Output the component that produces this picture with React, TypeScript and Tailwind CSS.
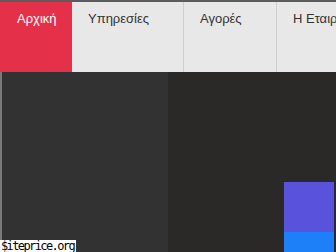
export default function App() {
  const tabs = [
    { label: 'Αρχική', w: 'w-[72px]', active: true },
    { label: 'Υπηρεσίες', w: 'w-[112px]', active: false },
    { label: 'Αγορές', w: 'w-[93px]', active: false },
    { label: 'Η Εταιρεία', w: 'w-[90px]', active: false },
  ];

  return (
    <div className="relative w-[336px] h-[252px] overflow-hidden bg-[#2a2928] flex flex-col font-['Liberation_Sans',Arial,sans-serif]">
      {/* top navigation */}
      <nav className="h-[72px] shrink-0 flex border-t-2 border-[#5c5c5c] bg-[#e8e8e8]">
        {tabs.map((t) => (
          <div
            key={t.label}
            className={`${t.w} shrink-0 pt-[7px] text-[13px] whitespace-nowrap ${
              t.active
                ? 'bg-[#e5304a] text-white pl-[17px]'
                : 'text-[#333] pl-[16px] border-r border-[#cfcfcf]'
            }`}
          >
            {t.label}
          </div>
        ))}
      </nav>

      {/* dark content */}
      <div className="flex-1 flex border-l-2 border-[#7a7a7a]">
        <div className="w-[166px] bg-[#323232]" />
        <div className="flex-1 bg-[#2a2928] flex flex-col items-end pt-[110px] pr-[2px]">
          <div className="w-[50px] flex flex-col">
            <div className="h-[50px] bg-[#5852dc]" />
            <div className="h-[20px] bg-[#1d80f8]" />
          </div>
        </div>
      </div>

      <span className="absolute left-0 bottom-0 bg-white text-black pl-[1px] pr-[2px] text-[12px] leading-[12px] h-[12px] font-['DejaVu_Sans_Mono',monospace] tracking-[-1.6px]">
        $iteprice.org
      </span>
    </div>
  );
}
